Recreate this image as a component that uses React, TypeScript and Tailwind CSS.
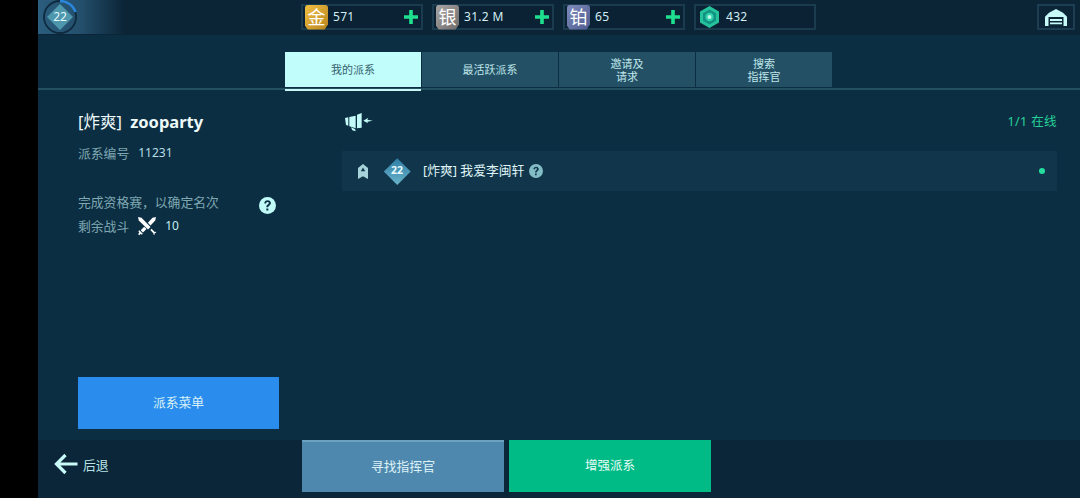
import React from "react";

const FONT = "[font-family:'Noto_Sans','Noto_Sans_CJK_SC',sans-serif]";

function Plus() {
  return (
    <svg width="14" height="14" viewBox="0 0 14 14" className="shrink-0">
      <path d="M5.200 0h3.600v5.200H14v3.600H8.800V14H5.200V8.800H0V5.200h5.200z" fill="#1fe08f" />
    </svg>
  );
}

function Tile({ ch, cls }: { ch: string; cls: string }) {
  return (
    <div className={`w-[23px] h-[25px] flex items-center justify-center text-[18px] leading-none text-white rounded-[3px] [clip-path:polygon(0_0,100%_0,100%_80%,85%_100%,12%_100%,0_85%)] ${cls}`}>
      {ch}
    </div>
  );
}

function Pill({ tile, value, plus = true }: { tile: React.ReactNode; value: string; plus?: boolean }) {
  return (
    <div className="w-[122px] h-[26px] border-2 border-[#1b3b4f] bg-[#0a2234] flex items-center pl-[2px] pr-[3px]">
      <div className="w-[23px] flex justify-center shrink-0">{tile}</div>
      <span className="ml-[5px] flex-1 text-[12px] text-[#d3eef2] tracking-[0.3px]">{value}</span>
      {plus && <Plus />}
    </div>
  );
}

function Tab({ label, active }: { label: React.ReactNode; active?: boolean }) {
  return (
    <div className={`relative w-[136px] h-[35px] flex items-center justify-center text-center text-[11px] leading-[13px] ${active ? "bg-[#c0fdfb] text-[#36606d]" : "bg-[#245066] text-[#bfe6e9]"}`}>
      {label}
      {active && <div className="absolute left-0 right-0 top-[37px] h-[2px] bg-[#c8f7f6]" />}
    </div>
  );
}

function Help({ size, bg, fg }: { size: number; bg: string; fg: string }) {
  return (
    <svg width={size} height={size} viewBox="0 0 20 20" className="shrink-0">
      <circle cx="10" cy="10" r="10" fill={bg} />
      <path d="M6.200 7.600C6.300 5.200 8 3.800 10.100 3.800c2.300 0 3.900 1.400 3.900 3.400 0 1.500-.9 2.300-1.900 3-.9.600-1.100 1-1.100 2H8.700c-.1-1.700.4-2.600 1.500-3.300.9-.6 1.300-1 1.300-1.600 0-.8-.6-1.300-1.500-1.300-1 0-1.600.7-1.600 1.600z M8.600 13.400h2.400v2.600H8.600z" fill={fg} />
    </svg>
  );
}

function Swords() {
  return (
    <svg width="20" height="20" viewBox="0 0 20 20" className="shrink-0">
      <g fill="#ffffff">
        <path d="M1 1l3.500.8L13.500 11l-2.500 2.500L1.800 4.500z" />
        <path d="M19 1l-.8 3.500-4.700 4.900-2.600-2.600L15.500 1.800z" />
        <path d="M7.200 10.700l2.300 2.400L6 16.500 3.700 14.200z" />
        <path d="M2.300 14.300l3.500 3.500-1 1-1-1-1.600 1.500-1-1L2.300 16.300l-1-1z" />
        <path d="M14.600 12.700l3.100 3.200 1.400-.1v1l-1.400 .3-.1 1.700h-1l-.2-1.600-3.100-3.100z" />
      </g>
    </svg>
  );
}

function Megaphone() {
  return (
    <svg width="29" height="20" viewBox="30 42 87 60" className="shrink-0">
      <g fill="#c3fbf8">
        <path d="M30 57l10-2v25l-7-2z" />
        <path d="M43 54l19-4v38l-19-6z" />
        <path d="M66 47l14-5v44l-14 2z" />
        <path d="M48 85l12 5 2 7-10-3z" />
        <path d="M85 65l15-9-3 6 16 3-16 3 2 5z" />
      </g>
    </svg>
  );
}

function Rank() {
  return (
    <svg width="10" height="15" viewBox="0 0 10 15" className="shrink-0">
      <path fillRule="evenodd" d="M0 4L5 0l5 4v11L5 12.200 0 15zM5 3.500L2.800 7.200h4.400z" fill="#a5d3d9" />
    </svg>
  );
}

function Garage() {
  return (
    <svg width="24" height="17" viewBox="0 0 24 17">
      <path d="M12 0l7 3.800 4 4V17h-3.500V8H4.500V17H1V7.800l4-4z" fill="#c6f9f8" />
      <path d="M6 10h12v2H6zM6 13.400h12v1.800H6z" fill="#c6f9f8" />
    </svg>
  );
}

function Gem() {
  return (
    <svg width="19" height="22" viewBox="0 0 19 22">
      <path d="M9.500 0L19 5.500v11L9.500 22 0 16.500v-11z" fill="#26c29c" />
      <path d="M9.500 3.500L16 7.200v7.600l-6.500 3.700L3 14.800V7.200z" fill="#129282" />
      <circle cx="9.500" cy="11" r="4.200" fill="#2fd0aa" />
      <circle cx="9.500" cy="11" r="2" fill="#bff7e8" />
    </svg>
  );
}

function Avatar() {
  return (
    <svg width="34" height="34" viewBox="0 0 34 34" className="block">
      <circle cx="17" cy="17" r="16" fill="none" stroke="#0e2a3e" strokeWidth="1.800" />
      <path d="M17 1A16 16 0 0 1 32.500 12" fill="none" stroke="#2b87dd" strokeWidth="2.400" />
      <path d="M17 4L30 17 17 30 4 17z" fill="#4f97ad" />
    </svg>
  );
}

export default function App() {
  return (
    <div className={`flex w-[1080px] h-[498px] bg-black overflow-hidden ${FONT}`}>
      <div className="w-[38px] shrink-0 bg-black" />
      <div className="flex-1 flex flex-col bg-[#0c2e42]">
        {/* top bar */}
        <header className="h-[35px] flex items-center bg-[#0b2436] pb-[1px]">
          <div className="relative w-[87px] h-[34px] shrink-0 bg-gradient-to-r from-[#2b5d7e] via-[#244f6c] to-[#0b2436] pl-[5px]">
            <Avatar />
            <span className="absolute left-[5px] top-0 w-[34px] h-[34px] flex items-center justify-center text-[12px] text-[#e2fbfb]">22</span>
          </div>
          <div className="ml-[176px] flex gap-[9px]">
            <Pill value="571" tile={<Tile ch="金" cls="bg-gradient-to-br from-[#f2c042] to-[#b7841e]" />} />
            <Pill value="31.2 M" tile={<Tile ch="银" cls="bg-gradient-to-br from-[#a9a7a5] to-[#6f6a6a]" />} />
            <Pill value="65" tile={<Tile ch="铂" cls="bg-gradient-to-br from-[#7f8cbc] to-[#4d5b8f]" />} />
            <Pill value="432" plus={false} tile={<Gem />} />
          </div>
          <div className="ml-auto mr-[5px] w-[38px] h-[26px] border-2 border-[#1d3e52] flex items-center justify-center">
            <Garage />
          </div>
        </header>

        {/* tabs */}
        <div className="h-[55px] shrink-0 pt-[17px] pl-[247px] border-b-2 border-[#24505f]">
          <div className="flex gap-px">
            <Tab active label="我的派系" />
            <Tab label="最活跃派系" />
            <Tab label={<>邀请及<br />请求</>} />
            <Tab label={<>搜索<br />指挥官</>} />
          </div>
        </div>

        {/* content */}
        <main className="flex-1 flex min-h-0">
          <aside className="w-[304px] shrink-0 pl-[40px] flex flex-col">
            <div className="mt-[20px] text-[16.500px] leading-[24px] font-bold text-[#eef9fa]"><span className="font-normal mr-[4px]">[炸爽]</span> zooparty</div>
            <div className="mt-[9px] flex text-[12.800px] leading-[20px] text-[#7ea8b2]">
              <span>派系编号</span>
              <span className="ml-[9px] text-[12px] text-[#b4dfe4]">11231</span>
            </div>
            <div className="mt-[26px] w-[201px] flex items-center justify-between text-[12.800px] leading-[20px] text-[#7ea8b2]">
              <span>完成资格赛，以确定名次</span>
              <span className="mt-[8px] -mr-[-3px]"><Help size={17} bg="#c0fbf8" fg="#0c3044" /></span>
            </div>
            <div className="mt-[2px] flex items-center text-[12.800px] leading-[20px] text-[#7ea8b2]">
              <span>剩余战斗</span>
              <span className="ml-[8px]"><Swords /></span>
              <span className="ml-[8px] text-[12px] text-[#c4eef0]">10</span>
            </div>
            <div className="mt-auto mb-[11px] w-[201px] h-[52px] bg-[#2a8cec] flex items-center justify-center text-[12.800px] text-[#d9f2f7]">派系菜单</div>
          </aside>

          <section className="flex-1 pr-[23px]">
            <div className="h-[61px] flex items-center justify-between pl-[3px] pt-[4px]">
              <span className="mt-[1px]"><Megaphone /></span>
              <span className="text-[12.500px] text-[#25d39a] tracking-[0.400px]">1/1 在线</span>
            </div>
            <div className="h-[40px] bg-[#11364b] flex items-center pl-[16px] pr-[12px]">
              <Rank />
              <div className="relative ml-[16px] w-[26px] h-[26px] flex items-center justify-center">
                <div className="absolute w-[18.500px] h-[18.500px] rotate-45 bg-gradient-to-br from-[#2e7ea6] to-[#69b3c9]" />
                <span className="relative text-[10.500px] font-bold text-[#e8fbff]">22</span>
              </div>
              <span className="ml-[13px] text-[12.800px] text-[#dff3f5]">[炸爽] 我爱李闽轩</span>
              <span className="ml-[5px]"><Help size={14} bg="#82bcc4" fg="#12384d" /></span>
              <span className="ml-auto w-[6px] h-[6px] rounded-full bg-[#25dd9e]" />
            </div>
          </section>
        </main>

        {/* bottom bar */}
        <footer className="h-[58px] shrink-0 bg-[#0b2638] flex pb-[6px]">
          <div className="w-[264px] flex items-center pl-[16px]">
            <svg width="24" height="22" viewBox="0 0 24 22" className="shrink-0 -mt-[5px]">
              <path d="M23.500 11H3M11.500 2L2.500 11l9 9" fill="none" stroke="#c8faf8" strokeWidth="3.200" />
            </svg>
            <span className="ml-[5px] text-[12.800px] text-[#b9e3e6]">后退</span>
          </div>
          <div className="w-[202px] bg-[#4f88ae] border-t-2 border-[#6da1c2] flex items-center justify-center text-[12.800px] text-[#dcf2f6]">寻找指挥官</div>
          <div className="ml-[5px] w-[202px] bg-[#01bb86] flex items-center justify-center text-[12.500px] text-[#eafdf7]">增强派系</div>
        </footer>
      </div>
    </div>
  );
}
